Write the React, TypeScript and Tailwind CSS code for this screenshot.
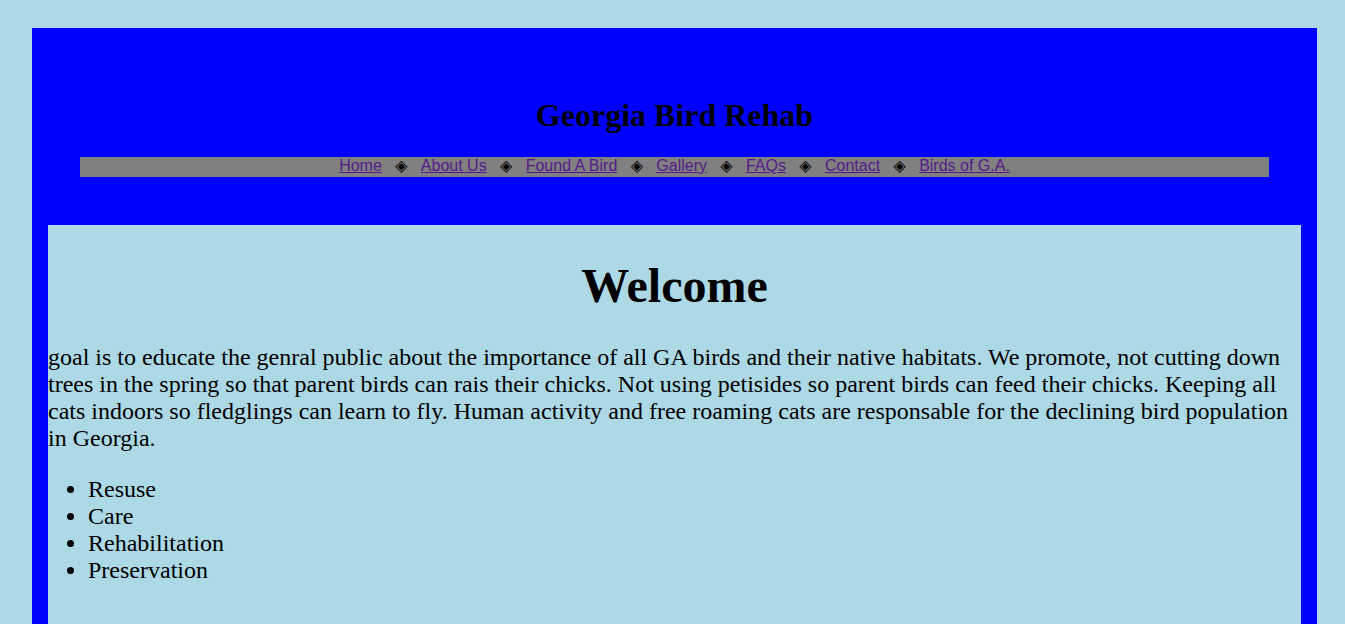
import React from "react";

const links = ["Home", "About Us", "Found A Bird", "Gallery", "FAQs", "Contact", "Birds of G.A."];

export default function App() {
  return (
    <div className="min-h-[624px] bg-[#add8e6] pt-[28px] pl-[32px] pr-[28px] pb-[20px] font-['Liberation_Serif',serif] text-black">
      <div className="bg-[#0000ff] px-[16px]">
        <header className="pt-[69px] pb-[48px]">
          <h1 className="text-center text-[32px] font-bold leading-[37px]">Georgia Bird Rehab</h1>
          <nav className="mx-[32px] mt-[23px] flex h-[20px] items-center justify-center bg-[#808080] pb-[2px] font-['Liberation_Sans',Arial,sans-serif] text-[16px] leading-[18px]">
            {links.map((l, i) => (
              <React.Fragment key={l}>
                {i > 0 && (
                  <span className="inline-block w-[39px] text-center font-['DejaVu_Sans',sans-serif] text-[16px] leading-[18px] text-black">◈</span>
                )}
                <a href="#" className="text-[#551a8b] underline">{l}</a>
              </React.Fragment>
            ))}
          </nav>
        </header>
        <main className="bg-[#add8e6] pt-[33px] pb-[40px]">
          <h2 className="text-center text-[48px] font-bold leading-[55px]">Welcome</h2>
          <p className="mt-[31px] text-[24px] leading-[27px]">
            goal is to educate the genral public about the importance of all GA birds and their native habitats. We promote, not cutting down trees in the spring so that parent birds can rais their chicks. Not using petisides so parent birds can feed their chicks. Keeping all cats indoors so fledglings can learn to fly. Human activity and free roaming cats are responsable for the declining bird population in Georgia.
          </p>
          <ul className="mt-[24px] list-disc pl-[40px] text-[24px] leading-[27px]">
            <li>Resuse</li>
            <li>Care</li>
            <li>Rehabilitation</li>
            <li>Preservation</li>
          </ul>
        </main>
      </div>
    </div>
  );
}
